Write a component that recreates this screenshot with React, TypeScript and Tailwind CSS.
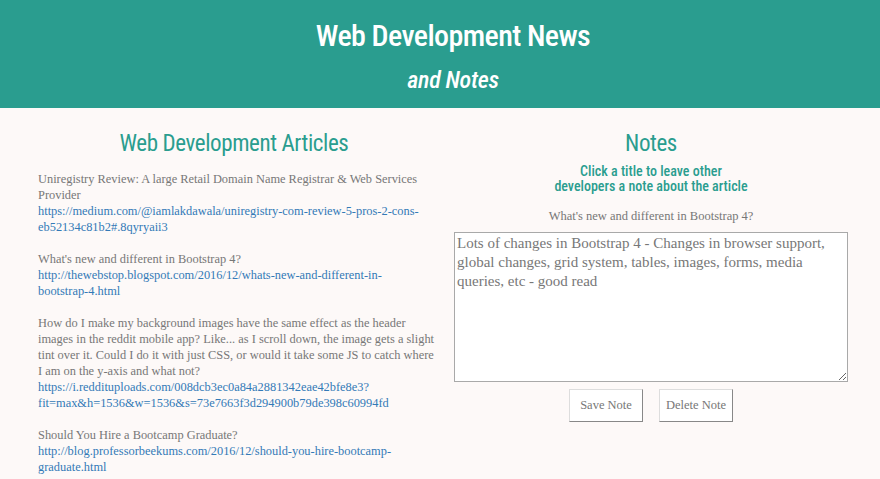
import React, { useState } from 'react';

interface Article {
  title: string;
  link: string;
}

const articles: Article[] = [
  {
    title: 'Uniregistry Review: A large Retail Domain Name Registrar & Web Services Provider',
    link: 'https://medium.com/@iamlakdawala/uniregistry-com-review-5-pros-2-cons-eb52134c81b2#.8qyryaii3',
  },
  {
    title: "What's new and different in Bootstrap 4?",
    link: 'http://thewebstop.blogspot.com/2016/12/whats-new-and-different-in-bootstrap-4.html',
  },
  {
    title:
      'How do I make my background images have the same effect as the header images in the reddit mobile app? Like... as I scroll down, the image gets a slight tint over it. Could I do it with just CSS, or would it take some JS to catch where I am on the y-axis and what not?',
    link: 'https://i.reddituploads.com/008dcb3ec0a84a2881342eae42bfe8e3?fit=max&h=1536&w=1536&s=73e7663f3d294900b79de398c60994fd',
  },
  {
    title: 'Should You Hire a Bootcamp Graduate?',
    link: 'http://blog.professorbeekums.com/2016/12/should-you-hire-bootcamp-graduate.html',
  },
];

const headFont = "font-['Roboto_Condensed',Roboto,sans-serif]";

const App: React.FC = () => {
  const [note, setNote] = useState(
    'Lots of changes in Bootstrap 4 - Changes in browser support, global changes, grid system, tables, images, forms, media queries, etc - good read'
  );

  return (
    <div className="min-h-screen bg-[#fdf9f8] font-['Liberation_Serif',Georgia,serif]">
      <header className="h-[108px] bg-[#2a9d8f] flex flex-col items-center text-white pl-[26px]">
        <h1 className={`${headFont} text-[30px] font-medium mt-[16px] leading-[40px] tracking-[-0.6px]`}>
          Web Development News
        </h1>
        <h2 className={`${headFont} text-[24px] font-medium italic leading-[32px] mt-[8px] tracking-[-0.3px]`}>
          and Notes
        </h2>
      </header>

      <main className="flex">
        {/* articles */}
        <section className="w-[440px] pl-[38px] pr-[4px]">
          <h3 className={`${headFont} text-[23px] text-[#2a9d8f] text-center mt-[20px] leading-[32px] tracking-[-0.4px] pr-[6px]`}>
            Web Development Articles
          </h3>
          <div className="mt-[11px] text-[12.4px] leading-[16px] text-[#777]">
            {articles.map((a) => (
              <div key={a.link} className="mb-[16px] break-words">
                <div>{a.title}</div>
                <a href={a.link} className="block max-w-[388px] text-[#337ab7]">
                  {a.link}
                </a>
              </div>
            ))}
          </div>
        </section>

        {/* notes */}
        <section className="w-[440px] flex flex-col items-center pl-[14px] pr-[32px]">
          <h3 className={`${headFont} text-[23px] text-[#2a9d8f] mt-[20px] leading-[32px] tracking-[-0.4px]`}>Notes</h3>
          <p className={`${headFont} text-[14px] font-medium text-[#2a9d8f] text-center leading-[15px] mt-[4px]`}>
            Click a title to leave other
            <br />
            developers a note about the article
          </p>
          <p className="text-[12.5px] text-[#777] mt-[14px] leading-[16px]">What's new and different in Bootstrap 4?</p>
          <textarea
            value={note}
            onChange={(e) => setNote(e.target.value)}
            className="mt-[8px] w-[394px] h-[150px] border border-[#a9a9a9] bg-white px-[2px] py-[1px] text-[15px] leading-[19px] text-[#777] resize-y"
          />
          <div className="flex gap-[16px] mt-[7px]">
            <button className="w-[74px] h-[33px] bg-white border border-[#ddd] border-r-[#888] border-b-[#888] text-[12.5px] text-[#777]">
              Save Note
            </button>
            <button className="w-[74px] h-[33px] bg-white border border-[#ddd] border-r-[#888] border-b-[#888] text-[12.5px] text-[#777]">
              Delete Note
            </button>
          </div>
        </section>
      </main>
    </div>
  );
};

export default App;
